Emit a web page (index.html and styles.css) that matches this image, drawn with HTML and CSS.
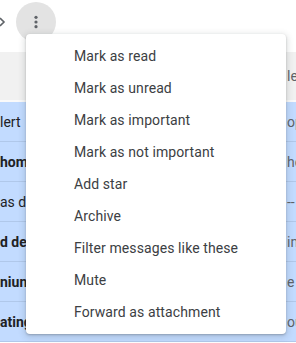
FILE: index.html
```html
<!DOCTYPE html>
<html>
<head>
<meta charset="utf-8">
<link rel="stylesheet" href="styles.css">
</head>
<body>
<div class="page">
  <div class="toolbar">
    <svg class="chev" width="12" height="12" viewBox="0 0 12 12"><path d="M2 2 L6 6 L2 10" fill="none" stroke="#5f6368" stroke-width="1.6"/></svg>
    <div class="more">
      <svg width="18" height="18" viewBox="0 0 18 18"><circle cx="9" cy="4.3" r="1.6" fill="#5f6368"/><circle cx="9" cy="9" r="1.6" fill="#5f6368"/><circle cx="9" cy="13.7" r="1.6" fill="#5f6368"/></svg>
    </div>
  </div>
  <div class="band">
    <span class="left"></span><span class="right">le</span>
  </div>
  <div class="rows">
    <div class="row"><span class="left">lert</span><span class="right">op</span></div>
    <div class="row unread"><span class="left">hom</span><span class="right">he</span></div>
    <div class="row"><span class="left">as d</span><span class="right">--</span></div>
    <div class="row unread"><span class="left">d de</span><span class="right">in</span></div>
    <div class="row unread"><span class="left">niun</span><span class="right">e</span></div>
    <div class="row unread"><span class="left">ating</span><span class="right">ou</span></div>
  </div>
</div>
<ul class="menu">
  <li>Mark as read</li>
  <li>Mark as unread</li>
  <li>Mark as important</li>
  <li>Mark as not important</li>
  <li>Add star</li>
  <li>Archive</li>
  <li>Filter messages like these</li>
  <li>Mute</li>
  <li>Forward as attachment</li>
</ul>
</body>
</html>
```
FILE: styles.css
```css
html, body {
  margin: 0;
  padding: 0;
}
body {
  width: 296px;
  height: 343px;
  overflow: hidden;
  position: relative;
  background: #fff;
  font-family: Roboto, "Liberation Sans", Arial, sans-serif;
  font-size: 14px;
  color: #202124;
}
.page {
  display: flex;
  flex-direction: column;
}
.toolbar {
  height: 52px;
  display: flex;
  align-items: flex-start;
}
.chev {
  margin-left: -2px;
  margin-top: 16px;
}
.more {
  margin-left: 6px;
  margin-top: 2px;
  width: 40px;
  height: 40px;
  border-radius: 50%;
  background: #e3e3e3;
  display: flex;
  align-items: center;
  justify-content: center;
}
.band {
  height: 48px;
  background: #f1f1f1;
  border-bottom: 2px solid #fafafa;
  display: flex;
  align-items: center;
}
.left {
  width: 287px;
  flex: none;
  white-space: nowrap;
  overflow: hidden;
}
.right {
  color: #5f6368;
  white-space: nowrap;
}
.rows {
  display: flex;
  flex-direction: column;
}
.row {
  height: 40px;
  box-sizing: border-box;
  background: #c2dbff;
  border-bottom: 1px solid #b0c8ea;
  display: flex;
  align-items: center;
}
.row.unread .left {
  font-weight: 700;
}
.menu {
  position: absolute;
  left: 26px;
  top: 34px;
  width: 260px;
  margin: 0;
  padding: 6px 0;
  list-style: none;
  background: #fff;
  border-radius: 4px;
  box-shadow: 0 2px 6px 2px rgba(60,64,67,.15), 0 1px 2px rgba(60,64,67,.3);
}
.menu li {
  height: 32px;
  line-height: 32px;
  padding-left: 48px;
  color: #3c4043;
  font-size: 14px;
  letter-spacing: 0.1px;
  white-space: nowrap;
}
```
